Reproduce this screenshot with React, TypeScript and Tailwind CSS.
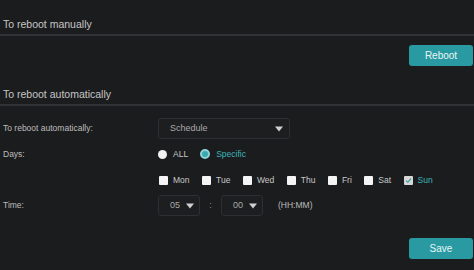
import React from "react";

const days = ["Mon", "Tue", "Wed", "Thu", "Fri", "Sat", "Sun"];

const Caret = () => (
	<svg width="8" height="6" viewBox="0 0 8 6" className="shrink-0">
		<path d="M0 0.5 L8 0.5 L4 5.5 Z" fill="#d0d0d0" />
	</svg>
);

const SectionTitle = ({ title, top }: { title: string; top: string }) => (
	<div className={`${top} pb-[4px] px-[3px] border-b-2 border-[#313235]`}>
		<span className="block text-[10.5px] leading-[12px] text-[#c6c6c6]">{title}</span>
	</div>
);

const Row = ({ label, className = "", children }: { label: string; className?: string; children: React.ReactNode }) => (
	<div className={`flex items-center ${className}`}>
		<div className="w-[158px] shrink-0 pl-[3px] text-[8.5px] text-[#bdbdbd]">{label}</div>
		<div className="flex items-center">{children}</div>
	</div>
);

export default function App() {
	return (
		<div
			className="w-[474px] h-[270px] bg-[#1b1c1e] overflow-hidden flex flex-col"
			style={{ fontFamily: '"Liberation Sans", Arial, sans-serif' }}
		>
			{/* manual */}
			<SectionTitle title="To reboot manually" top="pt-[18px]" />
			<div className="flex justify-end pr-[1px] mt-[9px]">
				<button className="w-[64px] h-[21px] rounded-[3px] bg-[#2a9aa2] text-[10px] text-[#e8f6f6]">Reboot</button>
			</div>

			{/* automatic */}
			<SectionTitle title="To reboot automatically" top="pt-[22px]" />

			<Row label="To reboot automatically:" className="mt-[12px]">
				<div className="w-[132px] h-[21px] rounded-[3px] border border-[#2e2f32] bg-[#1d1e20] flex items-center justify-between pl-[11px] pr-[6px]">
					<span className="text-[9px] text-[#a8a8a8]">Schedule</span>
					<Caret />
				</div>
			</Row>

			<Row label="Days:" className="mt-[8px] h-[14px]">
				<label className="flex items-center gap-[6px]">
					<span className="w-[9px] h-[9px] rounded-full bg-[#f2f2f2]" />
					<span className="text-[8.5px] text-[#c8c8c8]">ALL</span>
				</label>
				<label className="flex items-center gap-[6px] ml-[12px]">
					<span className="w-[10px] h-[10px] rounded-full border-2 border-[#8fd3d8] bg-[#3aa9b1]" />
					<span className="text-[8.5px] text-[#3db4bc]">Specific</span>
				</label>
			</Row>

			<Row label="" className="mt-[12px] h-[14px]">
				<div className="flex items-center ml-[1px] gap-x-[12.5px]">
					{days.map((d) => {
						const on = d === "Sun";
						return (
							<label key={d} className="flex items-center gap-[5px]">
								<span
									className={`w-[9px] h-[9px] rounded-[1px] flex items-center justify-center ${
										on ? "bg-[#d6d6d6]" : "bg-[#f4f4f4]"
									}`}
								>
									{on && (
										<svg width="7" height="7" viewBox="0 0 7 7">
											<path d="M1 3.6 L2.8 5.3 L6 1.6" stroke="#2a9aa2" strokeWidth="1.1" fill="none" />
										</svg>
									)}
								</span>
								<span className={`text-[8.5px] ${on ? "text-[#3db4bc]" : "text-[#c8c8c8]"}`}>{d}</span>
							</label>
						);
					})}
				</div>
			</Row>

			<Row label="Time:" className="mt-[8px]">
				<div className="w-[42px] h-[21px] rounded-[3px] border border-[#2e2f32] bg-[#1d1e20] flex items-center justify-between pl-[11px] pr-[5px]">
					<span className="text-[9px] text-[#a8a8a8]">05</span>
					<Caret />
				</div>
				<span className="w-[21px] text-center text-[9px] text-[#8a8a8a]">:</span>
				<div className="w-[42px] h-[21px] rounded-[3px] border border-[#2e2f32] bg-[#1d1e20] flex items-center justify-between pl-[11px] pr-[5px]">
					<span className="text-[9px] text-[#a8a8a8]">00</span>
					<Caret />
				</div>
				<span className="ml-[15px] text-[8.5px] text-[#bdbdbd]">(HH:MM)</span>
			</Row>

			<div className="flex justify-end pr-[1px] mt-[22px]">
				<button className="w-[64px] h-[21px] rounded-[3px] bg-[#2a9aa2] text-[10px] text-[#e8f6f6]">Save</button>
			</div>
		</div>
	);
}
